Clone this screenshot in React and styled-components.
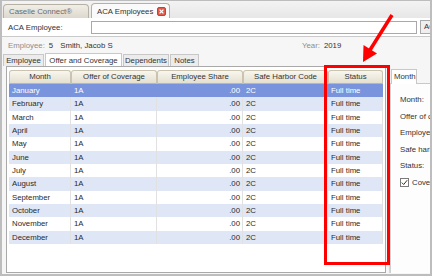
import React from 'react';
import styled, { createGlobalStyle } from 'styled-components';

const GlobalStyle = createGlobalStyle`
  html, body {
    margin: 0;
    padding: 0;
    background: #fff;
  }
  body {
    font-family: "Liberation Sans", Arial, sans-serif;
    font-size: 7.8px;
    color: #2a2a2a;
  }
`;

const MONTHS = [
  'January', 'February', 'March', 'April', 'May', 'June',
  'July', 'August', 'September', 'October', 'November', 'December',
];

const COLS = '62px 86px 86px 85px 55px';

const Frame = styled.div`
  position: relative;
  width: 432px;
  height: 276px;
  box-sizing: border-box;
  border: 2px solid #bdbdbd;
  border-top-width: 1px;
  background: #f6f6f6;
  display: flex;
  flex-direction: column;
  overflow: hidden;
`;

const TabStrip = styled.div`
  height: 17px;
  flex: none;
  display: flex;
  align-items: flex-end;
  gap: 2px;
  padding-left: 1px;
  background: linear-gradient(#f3f3f3, #e7e7e7);
`;

const DocTab = styled.div`
  height: ${p => (p.$active ? 15 : 14)}px;
  width: ${p => (p.$w ? `${p.$w}px` : 'auto')};
  box-sizing: border-box;
  display: flex;
  align-items: center;
  gap: 4px;
  padding: 0 3px 0 5px;
  border: 1px solid #b7b1a4;
  border-bottom: none;
  border-radius: 4px 4px 0 0;
  background: ${p => (p.$active ? '#fafafa' : 'linear-gradient(#f1eee7, #ddd8cc)')};
  color: ${p => (p.$active ? '#333' : '#6a6a6a')};
  white-space: nowrap;
`;

const TopBar = styled.div`
  height: 18px;
  flex: none;
  display: flex;
  align-items: center;
  padding-left: 6px;
  background: #fff;
  border-bottom: 1px solid #c9c9c9;
`;

const FieldLabel = styled.span`
  width: 83px;
  flex: none;
  color: #333;
`;

const TextBox = styled.div`
  width: 326px;
  height: 13px;
  flex: none;
  box-sizing: border-box;
  border: 1px solid #a9a9a9;
  background: #fff;
`;

const SmallButton = styled.div`
  margin-left: 3px;
  height: 14px;
  padding: 0 3px;
  flex: none;
  box-sizing: border-box;
  border: 1px solid #a9a9a9;
  background: #efefef;
  line-height: 12px;
  color: #333;
`;

const InfoRow = styled.div`
  height: 16px;
  flex: none;
  display: grid;
  grid-template-columns: 294px auto;
  align-items: center;
  padding-left: 6px;
`;

const Info = styled.span`
  display: flex;
  gap: 4px;
`;

const Muted = styled.span`
  color: #8d8d8d;
`;

const Value = styled.span`
  color: #333;
  margin-left: ${p => p.$gap || 0}px;
`;

const SubTabs = styled.div`
  height: 13px;
  flex: none;
  display: flex;
  align-items: flex-end;
  gap: 1px;
  padding-left: 1px;
`;

const SubTab = styled.div`
  width: ${p => p.$w}px;
  height: ${p => (p.$active ? 13 : 12)}px;
  box-sizing: border-box;
  display: flex;
  align-items: center;
  justify-content: center;
  border: 1px solid #c8c8c8;
  border-bottom: none;
  background: ${p => (p.$active ? '#fff' : '#ececec')};
  color: #333;
  white-space: nowrap;
`;

const Main = styled.div`
  flex: 1;
  display: flex;
  padding: 0 0 1px 4px;
  min-height: 0;
`;

const GridPanel = styled.div`
  width: 380px;
  flex: none;
  box-sizing: border-box;
  background: #fff;
  border: 1px solid #a9a9a9;
  padding: 3px 2px;
`;

const HeaderRow = styled.div`
  display: grid;
  grid-template-columns: ${COLS};
  height: 14px;
`;

const HeaderCell = styled.div`
  box-sizing: border-box;
  border: 1px solid #cac3ae;
  border-bottom-color: #bdb6a0;
  border-radius: 3px 3px 0 0;
  background: linear-gradient(#f8f6ef, #e4dfcf);
  text-align: center;
  line-height: 12px;
  color: #333;
`;

const Row = styled.div`
  display: grid;
  grid-template-columns: ${COLS};
  height: 13.33px;
  line-height: 13.33px;
  background: ${p => (p.$selected ? '#7994dc' : p.$alt ? '#dfe7f7' : '#fff')};
  color: ${p => (p.$selected ? '#fff' : '#2a2a2a')};
`;

const Cell = styled.div`
  padding: 0 ${p => (p.$right ? 2 : 3)}px;
  text-align: ${p => (p.$right ? 'right' : 'left')};
  border-right: 1px solid ${p => (p.$selected ? 'transparent' : '#e1e1e1')};
  white-space: nowrap;
  overflow: hidden;
`;

const Splitter = styled.div`
  width: 3px;
  flex: none;
  border-right: 1px solid #d6d6d6;
`;

const SidePanel = styled.div`
  flex: 1;
  display: flex;
  flex-direction: column;
  padding-top: 2px;
`;

const SideTab = styled.div`
  width: 26px;
  height: 15px;
  margin-left: 1px;
  box-sizing: border-box;
  border: 1px solid #c8c8c8;
  border-bottom: none;
  background: #fff;
  padding: 2px 0 0 2px;
  color: #333;
  position: relative;
  top: 1px;
`;

const SideBody = styled.div`
  flex: 1;
  border-top: 1px solid #c8c8c8;
  border-left: 1px solid #d0d0d0;
  background: #fdfdfd;
  display: flex;
  flex-direction: column;
  gap: 7.5px;
  padding: 11px 0 0 9px;
  white-space: nowrap;
  overflow: hidden;
  color: #333;
`;

const SideLine = styled.div`
  height: 9px;
  line-height: 9px;
  display: flex;
  align-items: center;
  gap: 3px;
`;

const CheckBox = styled.span`
  width: 9px;
  height: 9px;
  flex: none;
  box-sizing: border-box;
  border: 1px solid #7a7a7a;
  background: #fff;
  display: flex;
  align-items: center;
  justify-content: center;
`;

const Highlight = styled.div`
  position: absolute;
  left: 322px;
  top: 64px;
  width: 66px;
  height: 200px;
  box-sizing: border-box;
  border: 3px solid #f00;
  pointer-events: none;
`;

const Arrow = styled.svg`
  position: absolute;
  left: 0;
  top: 0;
  pointer-events: none;
`;

const CloseIcon = () => (
  <svg width="9" height="9" viewBox="0 0 9 9">
    <rect x="0.5" y="0.5" width="8" height="8" rx="1.5" fill="#e35a4a" stroke="#b8463a" />
    <path d="M2.6 2.6 L6.4 6.4 M6.4 2.6 L2.6 6.4" stroke="#fff" strokeWidth="1.3" />
  </svg>
);

const Tick = () => (
  <svg width="7" height="7" viewBox="0 0 7 7">
    <path d="M0.8 3.6 L2.7 5.5 L6.2 1.2" fill="none" stroke="#333" strokeWidth="1" />
  </svg>
);

const App = () => {
  return (
    <>
      <GlobalStyle />
      <Frame>
        <TabStrip>
          <DocTab $w={86}>Caselle Connect®</DocTab>
          <DocTab $active>ACA Employees<CloseIcon /></DocTab>
        </TabStrip>

        <TopBar>
          <FieldLabel>ACA Employee:</FieldLabel>
          <TextBox />
          <SmallButton>ACA</SmallButton>
        </TopBar>

        <InfoRow>
          <Info>
            <Muted>Employee:</Muted>
            <Value>5</Value>
            <Value $gap={3}>Smith, Jacob S</Value>
          </Info>
          <Info>
            <Muted>Year:</Muted>
            <Value>2019</Value>
          </Info>
        </InfoRow>

        <SubTabs>
          <SubTab $w={41}>Employee</SubTab>
          <SubTab $w={77} $active>Offer and Coverage</SubTab>
          <SubTab $w={46}>Dependents</SubTab>
          <SubTab $w={29}>Notes</SubTab>
        </SubTabs>

        <Main>
          <GridPanel>
            <HeaderRow>
              <HeaderCell>Month</HeaderCell>
              <HeaderCell>Offer of Coverage</HeaderCell>
              <HeaderCell>Employee Share</HeaderCell>
              <HeaderCell>Safe Harbor Code</HeaderCell>
              <HeaderCell>Status</HeaderCell>
            </HeaderRow>
            {MONTHS.map((m, i) => (
              <Row key={m} $selected={i === 0} $alt={i % 2 === 1}>
                <Cell $selected={i === 0}>{m}</Cell>
                <Cell $selected={i === 0}>1A</Cell>
                <Cell $selected={i === 0} $right>.00</Cell>
                <Cell $selected={i === 0}>2C</Cell>
                <Cell $selected={i === 0}>Full time</Cell>
              </Row>
            ))}
          </GridPanel>
          <Splitter />
          <SidePanel>
            <SideTab>Month</SideTab>
            <SideBody>
              <SideLine>Month:</SideLine>
              <SideLine>Offer of coverage:</SideLine>
              <SideLine>Employee share:</SideLine>
              <SideLine>Safe harbor code:</SideLine>
              <SideLine>Status:</SideLine>
              <SideLine><CheckBox><Tick /></CheckBox>Covered</SideLine>
            </SideBody>
          </SidePanel>
        </Main>

        <Highlight />
        <Arrow width="432" height="276" viewBox="0 0 432 276">
          <line x1="390" y1="14" x2="368" y2="49" stroke="#f00" strokeWidth="3.5" />
          <polygon points="361,61 375,52.5 361.5,44" fill="#f00" />
        </Arrow>
      </Frame>
    </>
  );
};

export default App;
